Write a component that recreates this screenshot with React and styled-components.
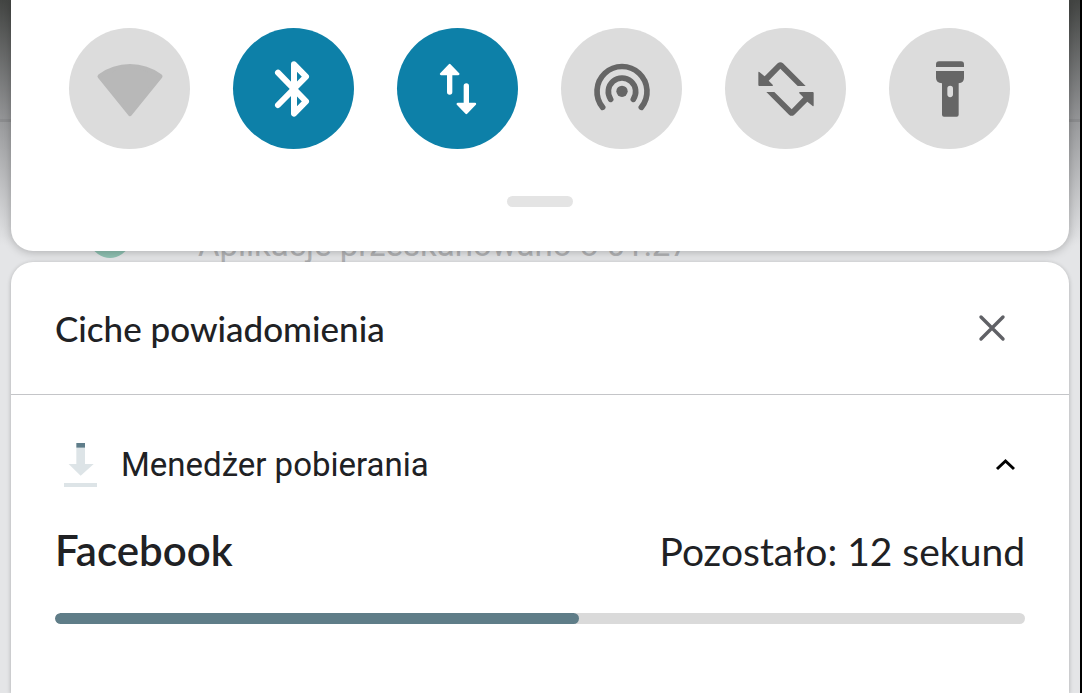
import React from "react";
import { useState } from "react";
import styled, { createGlobalStyle } from "styled-components";

const tiles = [
  { id: "wifi", label: "Wi-Fi", Icon: WifiIcon },
  { id: "bluetooth", label: "Bluetooth", Icon: BluetoothIcon },
  { id: "data", label: "Mobilna transmisja danych", Icon: DataIcon },
  { id: "hotspot", label: "Hotspot", Icon: HotspotIcon },
  { id: "rotate", label: "Autoobracanie", Icon: RotateIcon },
  { id: "torch", label: "Latarka", Icon: TorchIcon },
];

export default function App() {
  const [active, setActive] = useState(["bluetooth", "data"]);

  function toggleTile(id) {
    if (active.includes(id)) {
      setActive(active.filter((item) => item !== id));
      return;
    }
    setActive([...active, id]);
  }

  return (
    <>
      <GlobalStyle />
      <Screen>
        <QuickSettings>
          <Tiles>
            {tiles.map(({ id, label, Icon }) => (
              <Tile
                key={id}
                aria-label={label}
                aria-pressed={active.includes(id)}
                $on={active.includes(id)}
                onClick={() => toggleTile(id)}
              >
                <Icon />
              </Tile>
            ))}
          </Tiles>
          <Handle />
        </QuickSettings>

        <Peek>
          <Shield viewBox="0 0 40 40" aria-hidden="true">
            <path d="M0 0H40V28Q31 40 20 40Q9 40 0 28Z" fill="#8fc1b2" />
          </Shield>
          <PeekText>Aplikacje przeskanowano o 01:27</PeekText>
        </Peek>

        <Silent>
          <SilentHeader>
            <Title>Ciche powiadomienia</Title>
            <CloseButton aria-label="Zamknij">
              <svg width="30" height="30" viewBox="0 0 30 30" fill="none">
                <path
                  d="M4 4L26 26M26 4L4 26"
                  stroke="#606166"
                  strokeWidth="3.4"
                  strokeLinecap="round"
                />
              </svg>
            </CloseButton>
          </SilentHeader>
          <Notification>
            <AppRow>
              <IconSlot>
                <DownloadIcon />
              </IconSlot>
              <AppName>Menedżer pobierania</AppName>
              <CollapseButton aria-label="Zwiń">
                <svg width="20" height="14" viewBox="0 0 20 14" fill="none">
                  <path d="M2 11L10.500 3L19 11" stroke="#000" strokeWidth="3" />
                </svg>
              </CollapseButton>
            </AppRow>
            <Details>
              <FileName id="file">Facebook</FileName>
              <TimeLeft>Pozostało: 12 sekund</TimeLeft>
            </Details>
            <Progress aria-labelledby="file" value="54" max="100" />
          </Notification>
        </Silent>
      </Screen>
    </>
  );
}

function WifiIcon() {
  return (
    <TileSvg viewBox="0 0 363 363">
      <path
        d="M92 145A152 152 0 0 1 274 145L183 258Z"
        fill="#b8b8b8"
        stroke="#b8b8b8"
        strokeWidth="13"
        strokeLinejoin="round"
      />
    </TileSvg>
  );
}

function BluetoothIcon() {
  return (
    <TileSvg viewBox="0 0 363 363">
      <path
        d="M135 134L219 220L183 257V109L219 146L135 231"
        fill="none"
        stroke="currentColor"
        strokeWidth="18"
        strokeLinecap="round"
        strokeLinejoin="round"
      />
    </TileSvg>
  );
}

function DataIcon() {
  return (
    <TileSvg viewBox="0 0 363 363">
      <g fill="currentColor" stroke="currentColor" strokeLinecap="round" strokeLinejoin="round">
        <path d="M158 192V140M208 174V226" strokeWidth="16" />
        <path d="M158 111L132 138H184ZM208 255L182 228H234Z" strokeWidth="7" />
      </g>
    </TileSvg>
  );
}

function HotspotIcon() {
  return (
    <TileSvg viewBox="0 0 363 363">
      <circle cx="183" cy="190" r="17" fill="currentColor" />
      <path
        d="M125 238A75 75 0 1 1 241 238M149 214A41 41 0 1 1 217 214"
        fill="none"
        stroke="currentColor"
        strokeWidth="17"
        strokeLinecap="round"
      />
    </TileSvg>
  );
}

function RotateIcon() {
  const half =
    "M103 132L119 145L158 106Q166 99 174 106L242 174H218L166 122L131 158L143 170Q145 174 141 174H103Q100 174 100 171V134Q100 130 103 132Z";
  return (
    <TileSvg viewBox="0 0 363 363">
      <path d={half} fill="currentColor" />
      <path d={half} fill="currentColor" transform="rotate(180 183 183)" />
    </TileSvg>
  );
}

function TorchIcon() {
  return (
    <TileSvg viewBox="0 0 363 363">
      <path d="M141 117V109Q141 100 150 100H216Q225 100 225 109V117Z" fill="currentColor" />
      <path
        fillRule="evenodd"
        d="M141 129H225V150Q225 164 209 166V260Q209 266 203 266H165Q159 266 159 260V166Q141 164 141 150ZM175 182V199A8 8 0 0 0 192 199V182A8 8 0 0 0 175 182Z"
        fill="currentColor"
      />
    </TileSvg>
  );
}

function DownloadIcon() {
  return (
    <svg width="33" height="44" viewBox="0 0 99 132" aria-hidden="true">
      <path d="M37 14H63V63H89L50 98L14 63H37ZM0 120H99V132H0Z" fill="#dde4e7" />
      <path d="M37 0H63V14H37Z" fill="#5f7d8a" />
    </svg>
  );
}

const GlobalStyle = createGlobalStyle`
  * {
    box-sizing: border-box;
  }
  body {
    margin: 0;
    color: #202124;
    font-family: Lato, sans-serif;
  }
  button {
    padding: 0;
    border: 0;
    background: none;
    cursor: pointer;
  }
`;

const Screen = styled.main`
  min-height: 100vh;
  padding: 0 11px;
  border-right: 2px solid #000;
  display: flex;
  flex-direction: column;
  overflow: hidden;
  background: linear-gradient(
    #434543 0,
    #949597 119px,
    #8b8c8e 119px,
    #8b8c8e 122px,
    #9a9b9d 122px,
    #e4e5e7 245px
  );
`;

const QuickSettings = styled.section`
  position: relative;
  z-index: 1;
  padding: 28px 59px 44px 58px;
  border-radius: 0 0 22px 22px;
  background: #fff;
  box-shadow: 0 1px 10px rgba(0, 0, 0, 0.25);
  display: flex;
  flex-direction: column;
  gap: 47px;
`;

const Tiles = styled.div`
  display: flex;
  justify-content: space-between;
`;

const Tile = styled.button`
  width: 121px;
  height: 121px;
  border-radius: 50%;
  background: ${({ $on }) => ($on ? "#0d80a8" : "#dcdcdc")};
  color: ${({ $on }) => ($on ? "#fff" : "#666")};
`;

const TileSvg = styled.svg`
  display: block;
  width: 100%;
  height: 100%;
`;

const Handle = styled.div`
  width: 66px;
  height: 11px;
  border-radius: 6px;
  background: #e4e4e4;
  align-self: center;
`;

const Peek = styled.div`
  height: 11px;
  padding: 0 79px;
  display: flex;
  align-items: flex-end;
  gap: 68px;
  overflow: hidden;
`;

const Shield = styled.svg`
  width: 40px;
  height: 40px;
  margin-bottom: 4px;
  flex-shrink: 0;
`;

const PeekText = styled.span`
  color: #b2b3b5;
  font-family: Roboto, sans-serif;
  font-size: 33px;
  line-height: 34px;
  white-space: nowrap;
`;

const Silent = styled.section`
  flex: 1;
  border-radius: 22px 22px 0 0;
  background: #fff;
  box-shadow: 0 1px 4px rgba(0, 0, 0, 0.25);
`;

const SilentHeader = styled.header`
  height: 133px;
  padding: 0 44px;
  border-bottom: 1px solid #c4c5c8;
  display: flex;
  align-items: center;
  justify-content: space-between;
`;

const Title = styled.h2`
  margin: 0;
  font-size: 35px;
  font-weight: 500;
  line-height: 40px;
`;

const CloseButton = styled.button`
  width: 66px;
  height: 66px;
  display: flex;
  align-items: center;
  justify-content: center;
`;

const Notification = styled.article`
  padding: 46px 44px;
`;

const AppRow = styled.div`
  height: 48px;
  display: flex;
  align-items: center;
  gap: 16px;
`;

const IconSlot = styled.span`
  width: 50px;
  display: flex;
  justify-content: center;
`;

const AppName = styled.span`
  flex: 1;
  font-family: Roboto, sans-serif;
  font-size: 33px;
  line-height: 40px;
`;

const CollapseButton = styled.button`
  width: 40px;
  height: 40px;
  display: flex;
  align-items: center;
  justify-content: center;
`;

const Details = styled.div`
  margin: 37px 0 38px;
  display: flex;
  align-items: baseline;
  justify-content: space-between;
  line-height: 48px;
`;

const FileName = styled.h3`
  margin: 0;
  font-size: 42px;
  font-weight: 600;
`;

const TimeLeft = styled.span`
  font-size: 39px;
`;

const Progress = styled.progress`
  display: block;
  width: 100%;
  height: 11px;
  border: 0;
  border-radius: 6px;
  overflow: hidden;
  appearance: none;
  background: #dadada;

  &::-webkit-progress-bar {
    background: #dadada;
  }
  &::-webkit-progress-value {
    border-radius: 6px;
    background: #5f7d88;
  }
`;
